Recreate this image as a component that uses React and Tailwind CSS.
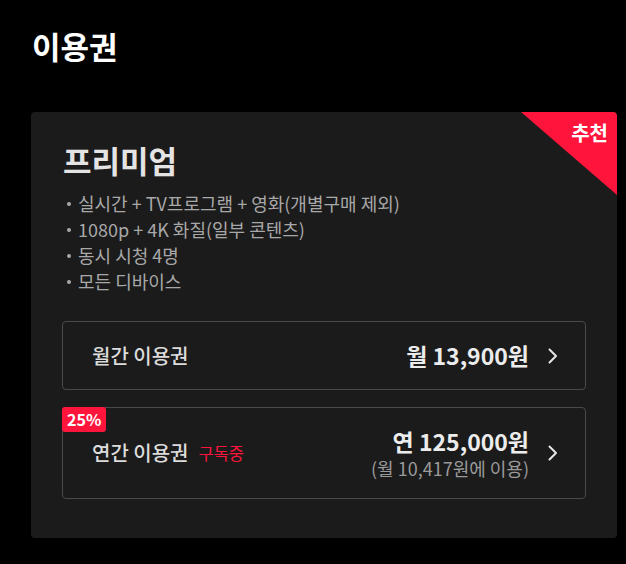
import React from "react";

function Chevron() {
  return (
    <svg width="10" height="16" viewBox="0 0 10 16" fill="none" className="shrink-0">
      <polyline points="1.5,1.5 8,8 1.5,14.5" stroke="#e6e6e6" strokeWidth="2" strokeLinecap="round" strokeLinejoin="round" />
    </svg>
  );
}

export default function App() {
  // plan features
  const features = [
    "실시간 + TV프로그램 + 영화(개별구매 제외)",
    "1080p + 4K 화질(일부 콘텐츠)",
    "동시 시청 4명",
    "모든 디바이스",
  ];

  return (
    <div
      className="min-h-[564px] w-[626px] bg-black pt-[26px] pl-[31px]"
      style={{ fontFamily: '"Noto Sans CJK KR", "Noto Sans", sans-serif' }}
    >
      {/* Header */}
      <h1 className="pl-px text-[31px] font-bold leading-[40px] text-white">이용권</h1>

      {/* Plan card */}
      <div className="relative mt-[46px] w-[586px] overflow-hidden rounded-[4px] bg-[#1b1b1b] px-[31px] pt-[28px] pb-[39px]">
        <div className="absolute top-0 right-0 h-[83px] w-[96px] bg-[#ff153c] [clip-path:polygon(0_0,100%_0,100%_100%)]">
          <span className="absolute top-[7px] right-[9px] text-[20px] font-bold leading-[28px] text-white">추천</span>
        </div>

        <h2 className="pl-px text-[31px] font-bold leading-[40px] text-[#e4e4e4]">프리미엄</h2>

        <ul className="mt-[10px] text-[18px] leading-[26px] text-[#a8a8a8]">
          {features.map((f) => (
            <li key={f} className="flex items-center">
              <span className="mt-[2px] mr-[7px] ml-[5px] inline-block h-[4px] w-[4px] rounded-full bg-[#a8a8a8]" />
              {f}
            </li>
          ))}
        </ul>

        {/* Monthly */}
        <div className="mt-[27px] flex h-[69px] items-center rounded-[4px] border border-[#4a4a4a] pl-[29px] pr-[27px]">
          <span className="text-[20px] font-medium text-[#dcdcdc]">월간 이용권</span>
          <span className="ml-auto text-[23px] font-bold text-[#ececec]">월 13,900원</span>
          <span className="ml-[19px]">
            <Chevron />
          </span>
        </div>

        {/* Yearly */}
        <div className="relative mt-[17px] flex h-[92px] items-center rounded-[4px] border border-[#4a4a4a] pl-[29px] pr-[27px]">
          <span className="absolute -top-px -left-px rounded-[3px] bg-[#ff153c] px-[5px] text-[16px] font-bold leading-[25px] text-white">
            25%
          </span>
          <span className="text-[20px] font-medium text-[#dcdcdc]">연간 이용권</span>
          <span className="ml-[10px] text-[16.5px] text-[#ff153c]">구독중</span>
          <div className="ml-auto flex flex-col items-end">
            <span className="text-[23px] font-bold leading-[30px] text-[#ececec]">연 125,000원</span>
            <span className="text-[18px] leading-[24px] text-[#9a9a9a]">(월 10,417원에 이용)</span>
          </div>
          <span className="ml-[19px]">
            <Chevron />
          </span>
        </div>
      </div>
    </div>
  );
}
